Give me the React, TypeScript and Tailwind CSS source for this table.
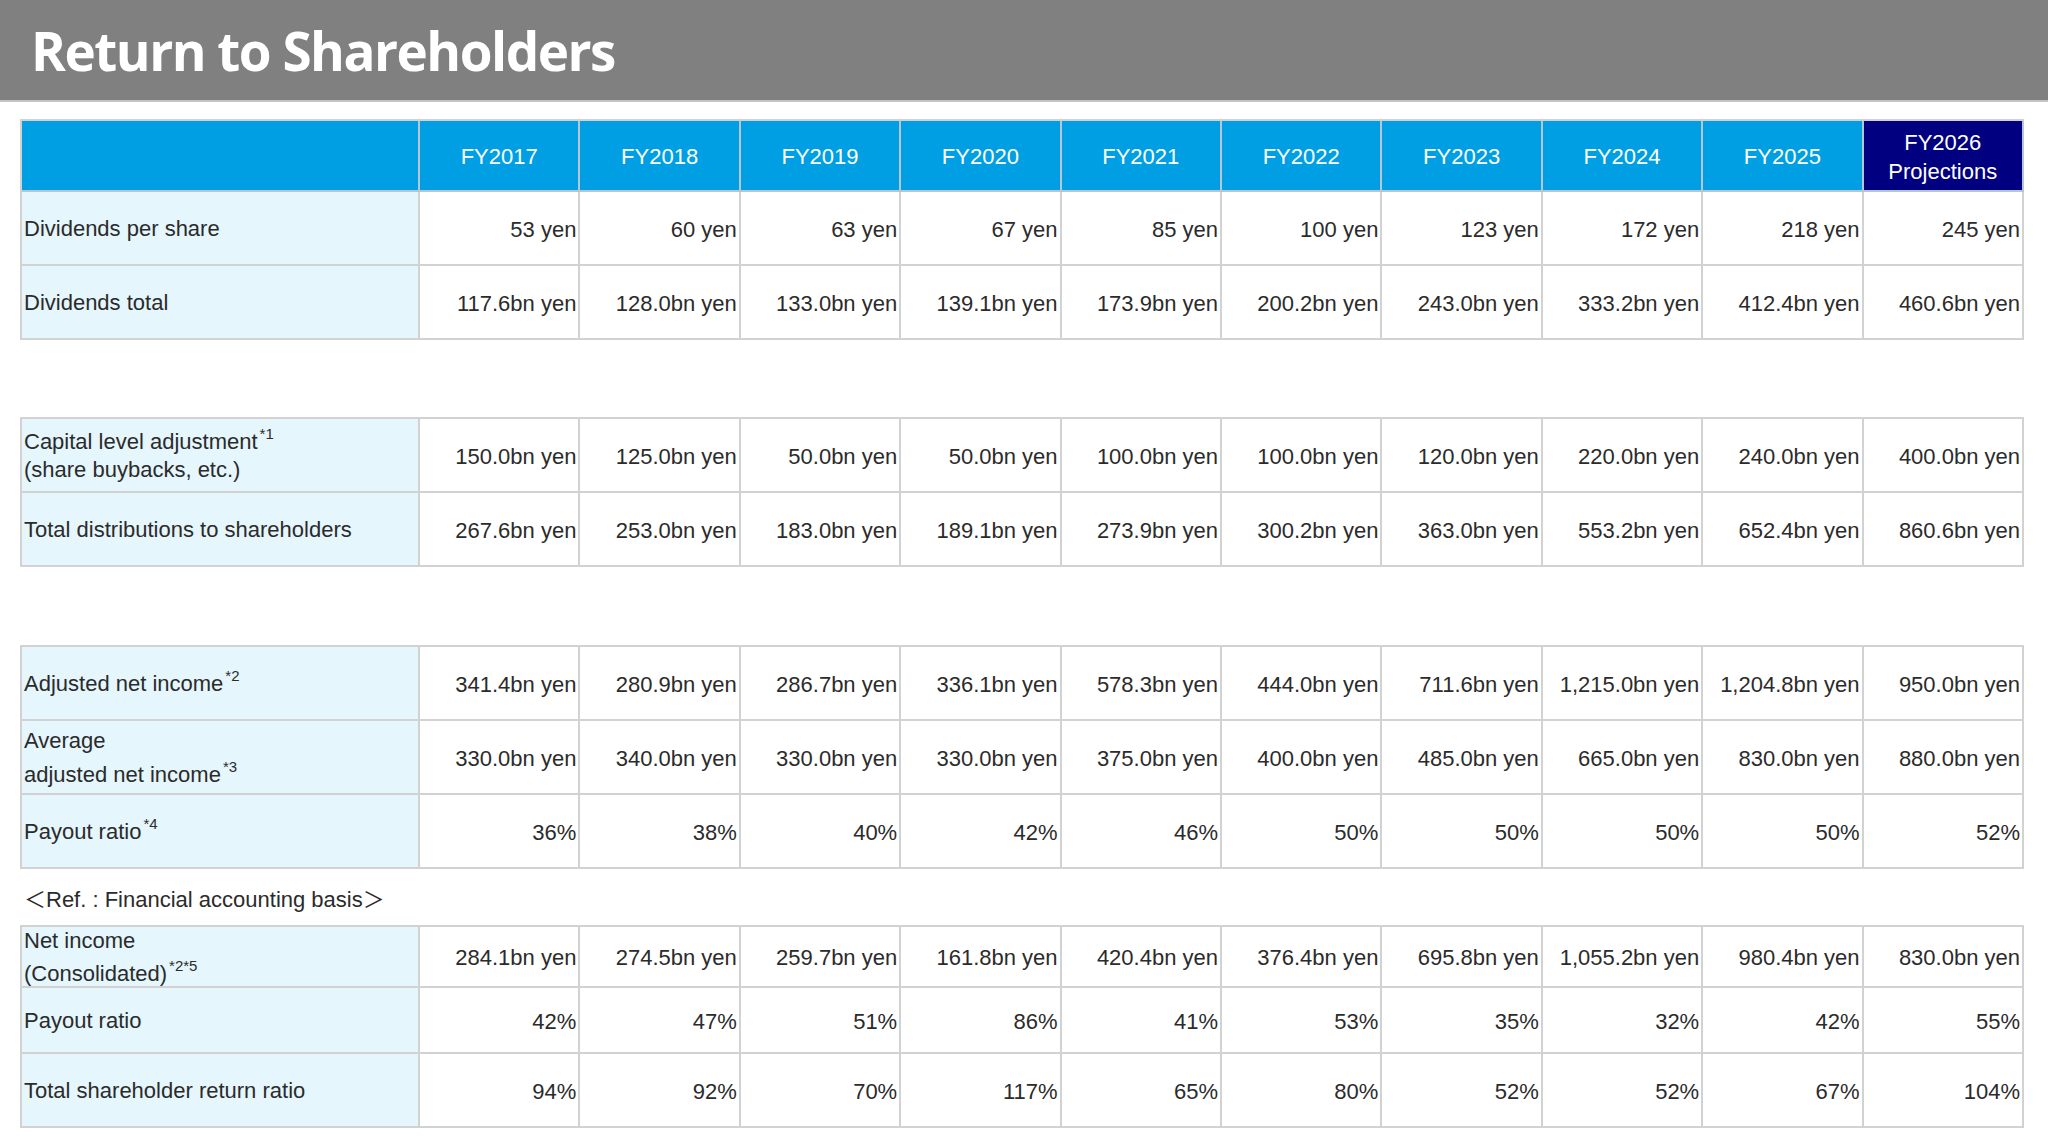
import type { ReactNode } from 'react';

type Row = {
  label: ReactNode;
  values: string[];
  h: string;
};

const GRID = 'ml-[20px] grid w-[2004px] grid-cols-[398px_repeat(10,minmax(0,1fr))] border-l-2 border-t-2 border-[#d2d2d2]';

const years = ['FY2017', 'FY2018', 'FY2019', 'FY2020', 'FY2021', 'FY2022', 'FY2023', 'FY2024', 'FY2025'];

function Sup({ children }: { children: ReactNode }) {
  return <sup className="-top-[10px] ml-[2px] text-[15px]">{children}</sup>;
}

const bn = (xs: string[]) => xs.map((x) => `${x}bn yen`);

const section1: Row[] = [
  {
    label: 'Dividends per share',
    values: ['53', '60', '63', '67', '85', '100', '123', '172', '218', '245'].map((x) => `${x} yen`),
    h: 'h-[74px]',
  },
  {
    label: 'Dividends total',
    values: bn(['117.6', '128.0', '133.0', '139.1', '173.9', '200.2', '243.0', '333.2', '412.4', '460.6']),
    h: 'h-[74px]',
  },
];

const section2: Row[] = [
  {
    label: (
      <div className="leading-[28px]">
        <div>
          Capital level adjustment<Sup>*1</Sup>
        </div>
        <div>(share buybacks, etc.)</div>
      </div>
    ),
    values: bn(['150.0', '125.0', '50.0', '50.0', '100.0', '100.0', '120.0', '220.0', '240.0', '400.0']),
    h: 'h-[74px]',
  },
  {
    label: 'Total distributions to shareholders',
    values: bn(['267.6', '253.0', '183.0', '189.1', '273.9', '300.2', '363.0', '553.2', '652.4', '860.6']),
    h: 'h-[74px]',
  },
];

const section3: Row[] = [
  {
    label: (
      <span>
        Adjusted net income<Sup>*2</Sup>
      </span>
    ),
    values: bn(['341.4', '280.9', '286.7', '336.1', '578.3', '444.0', '711.6', '1,215.0', '1,204.8', '950.0']),
    h: 'h-[74px]',
  },
  {
    label: (
      <div className="leading-[28px]">
        <div>Average</div>
        <div className="pt-[6px]">
          adjusted net income<Sup>*3</Sup>
        </div>
      </div>
    ),
    values: bn(['330.0', '340.0', '330.0', '330.0', '375.0', '400.0', '485.0', '665.0', '830.0', '880.0']),
    h: 'h-[74px]',
  },
  {
    label: (
      <span>
        Payout ratio<Sup>*4</Sup>
      </span>
    ),
    values: ['36%', '38%', '40%', '42%', '46%', '50%', '50%', '50%', '50%', '52%'],
    h: 'h-[74px]',
  },
];

const section4: Row[] = [
  {
    label: (
      <div className="leading-[28px]">
        <div>Net income</div>
        <div className="pt-[5px]">
          (Consolidated)<Sup>*2*5</Sup>
        </div>
      </div>
    ),
    values: bn(['284.1', '274.5', '259.7', '161.8', '420.4', '376.4', '695.8', '1,055.2', '980.4', '830.0']),
    h: 'h-[61px]',
  },
  {
    label: 'Payout ratio',
    values: ['42%', '47%', '51%', '86%', '41%', '53%', '35%', '32%', '42%', '55%'],
    h: 'h-[66px]',
  },
  {
    label: 'Total shareholder return ratio',
    values: ['94%', '92%', '70%', '117%', '65%', '80%', '52%', '52%', '67%', '104%'],
    h: 'h-[74px]',
  },
];

function Rows({ rows }: { rows: Row[] }) {
  return (
    <>
      {rows.map((row, i) => (
        <div key={i} className="contents">
          <div className={`flex items-center border-b-2 border-r-2 border-[#d2d2d2] bg-[#e5f6fd] pl-[2px] pt-[2px] leading-[28px] ${row.h}`}>
            {row.label}
          </div>
          {row.values.map((v, j) => (
            <div key={j} className={`flex items-center justify-end border-b-2 border-r-2 border-[#d2d2d2] bg-white pr-[2px] pt-[3px] leading-[28px] ${row.h}`}>
              {v}
            </div>
          ))}
        </div>
      ))}
    </>
  );
}

export default function App() {
  return (
    <div className="min-h-[1143px] w-[2048px] bg-white font-['Liberation_Sans',Arial,sans-serif] text-[22px] text-[#2b2b2b]">
      <header className="flex h-[102px] items-center border-b-2 border-[#c4c4c4] bg-[#808080] pl-[31px]">
        <h1 className="font-['Open_Sans',sans-serif] text-[53px] leading-none font-bold tracking-[-1.5px] text-white">Return to Shareholders</h1>
      </header>

      <div className={`mt-[17px] ${GRID}`}>
        <div className="h-[71px] border-b-2 border-r-2 border-[#b7c6d0] bg-[#009fe3]" />
        {years.map((y) => (
          <div key={y} className="flex h-[71px] items-center justify-center border-b-2 border-r-2 border-[#b7c6d0] bg-[#009fe3] pt-[2px] text-white">
            {y}
          </div>
        ))}
        <div className="flex h-[71px] flex-col items-center justify-center border-b-2 border-r-2 border-[#b7c6d0] bg-[#000080] pt-[2px] leading-[29px] text-white">
          <span>FY2026</span>
          <span>Projections</span>
        </div>
        <Rows rows={section1} />
      </div>

      <div className={`mt-[77px] ${GRID}`}>
        <Rows rows={section2} />
      </div>

      <div className={`mt-[78px] ${GRID}`}>
        <Rows rows={section3} />
      </div>

      <div className="flex h-[56px] items-center pl-[24px] pt-[5px] font-['Liberation_Sans','Noto_Sans_CJK_JP',sans-serif]">
        ＜Ref. : Financial accounting basis＞
      </div>

      <div className={GRID}>
        <Rows rows={section4} />
      </div>
    </div>
  );
}
